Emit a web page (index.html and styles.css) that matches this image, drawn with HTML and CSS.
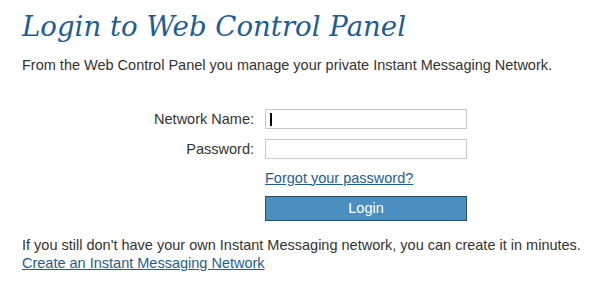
FILE: index.html
```html
<!DOCTYPE html>
<html>
<head>
<meta charset="utf-8">
<link rel="stylesheet" href="styles.css">
</head>
<body>
<div class="page">
  <h1 class="title">Login to Web Control Panel</h1>
  <p class="intro">From the Web Control Panel you manage your private Instant Messaging Network.</p>
  <form class="form">
    <label class="label">Network Name:</label>
    <div class="field"><span class="caret"></span></div>
    <label class="label">Password:</label>
    <div class="field"></div>
    <span></span>
    <a class="link forgot" href="#">Forgot your password?</a>
    <span></span>
    <div class="button">Login</div>
  </form>
  <p class="outro">If you still don't have your own Instant Messaging network, you can create it in minutes.<br><a class="link" href="#">Create an Instant Messaging Network</a></p>
</div>
</body>
</html>
```

FILE: styles.css
```css
html, body { margin: 0; padding: 0; background: #fff; }
.page {
  padding: 9px 0 0 22px;
  font-family: "Liberation Sans", Arial, sans-serif;
  font-size: 14.5px;
  color: #333;
}
.title {
  margin: 0;
  font-family: "DejaVu Serif", Georgia, serif;
  font-style: italic;
  font-weight: normal;
  font-size: 27.6px;
  line-height: 36px;
  color: #1e5d94;
}
.intro { margin: 12px 0 0 0; line-height: 17px; }
.form {
  display: grid;
  grid-template-columns: 232px 202px;
  grid-template-rows: 20px 20px 17px 25px;
  column-gap: 11px;
  row-gap: 10px;
  align-items: center;
  margin-top: 35px;
}
.label { text-align: right; }
.field {
  box-sizing: border-box;
  height: 20px;
  border: 1px solid #c8c8c8;
  background: #fff;
  position: relative;
}
.caret {
  position: absolute;
  left: 4px; top: 3px;
  width: 2px; height: 13px;
  background: #000;
}
.link { color: #1e5d94; text-decoration: underline; }
.button {
  box-sizing: border-box;
  height: 25px;
  border: 1px solid #2a4e68;
  background: #4a8fbf;
  color: #fff;
  text-align: center;
  line-height: 23px;
}
.outro { margin: 15px 0 0 0; line-height: 18px; }
```
